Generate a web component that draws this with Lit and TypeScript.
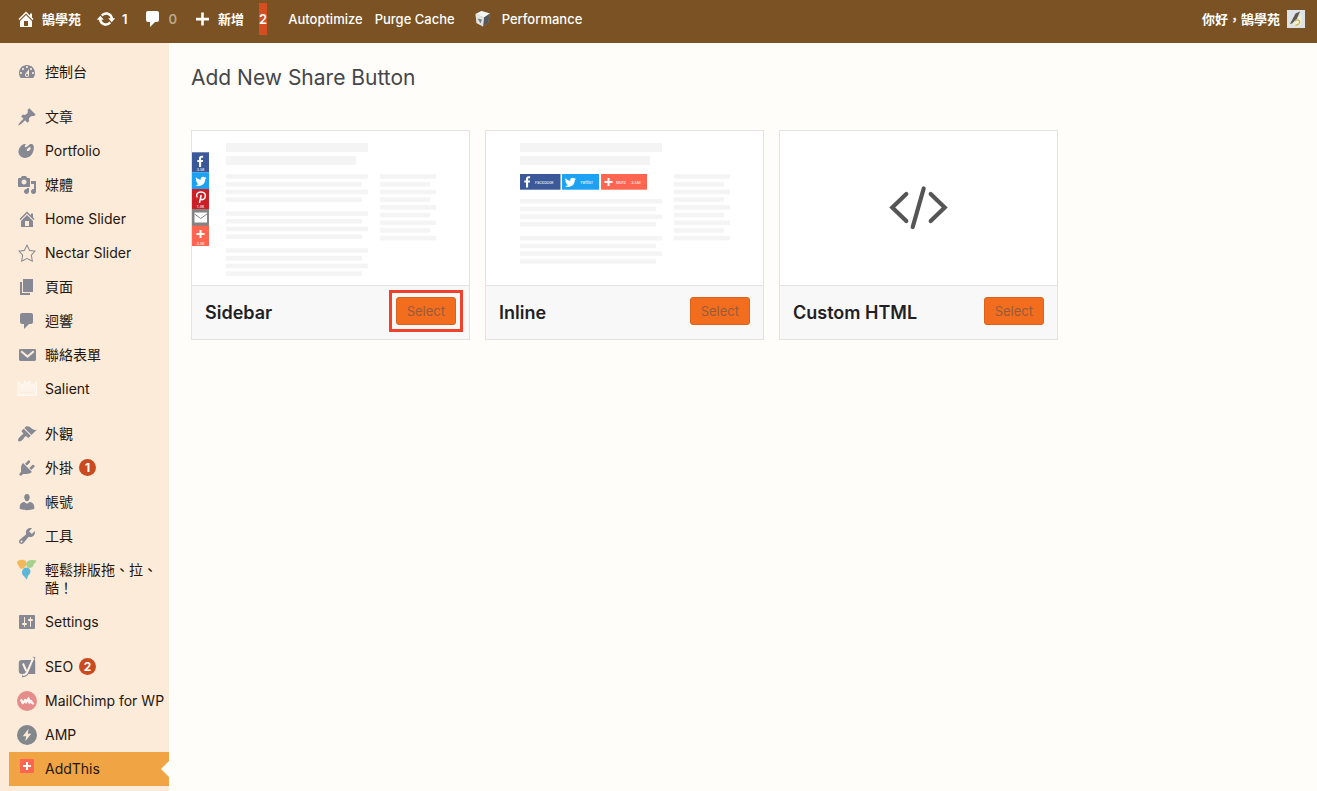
import { LitElement, html, svg, css, nothing, type SVGTemplateResult } from "lit";
import { customElement } from "lit/decorators.js";
import { classMap } from "lit/directives/class-map.js";

const glyph = (d: string) => svg`<path d=${d} fill="currentColor" fill-rule="evenodd"></path>`;

const icons: Record<string, SVGTemplateResult> = {
  home: glyph("M16 8.5l1.53 1.53-1.06 1.06L10 4.6l-6.47 6.49-1.06-1.06L10 2.5l4 4v-2h2v4zm-6-2.46l6 5.99V18H4v-5.97zM12 17v-5H8v5h4z"),
  update: glyph("M10.2 3.28c3.53 0 6.43 2.61 6.92 6h2.08l-3.5 4-3.5-4h2.32c-.45-1.97-2.21-3.45-4.32-3.45-1.45 0-2.73.71-3.54 1.78L4.95 5.66C6.23 4.2 8.11 3.28 10.2 3.28zm-.4 13.44c-3.52 0-6.43-2.61-6.92-6H.8l3.5-4c1.17 1.33 2.33 2.67 3.5 4H5.48c.45 1.97 2.21 3.45 4.32 3.45 1.45 0 2.73-.71 3.54-1.78l1.71 1.95c-1.28 1.46-3.15 2.38-5.25 2.38z"),
  comment: glyph("M5 2h9c1.1 0 2 .9 2 2v7c0 1.1-.9 2-2 2h-2l-5 5v-5H5c-1.1 0-2-.9-2-2V4c0-1.1.9-2 2-2z"),
  plus: glyph("M17 8.8v2.6h-5.2v5.2H9.2v-5.2H4V8.8h5.2V3.6h2.6v5.2z"),
  dashboard: glyph("M3.76 16h12.48c1.1-1.37 1.76-3.11 1.76-5 0-4.42-3.58-8-8-8s-8 3.58-8 8c0 1.89.66 3.63 1.76 5zM10 4c.55 0 1 .45 1 1s-.45 1-1 1-1-.45-1-1 .45-1 1-1zM6 6c.55 0 1 .45 1 1s-.45 1-1 1-1-.45-1-1 .45-1 1-1zm8 0c.55 0 1 .45 1 1s-.45 1-1 1-1-.45-1-1 .45-1 1-1zm-5.37 5.55L12 7v6c0 1.1-.9 2-2 2s-2-.9-2-2c0-.57.24-1.08.63-1.45zM4 10c.55 0 1 .45 1 1s-.45 1-1 1-1-.45-1-1 .45-1 1-1zm12 0c.55 0 1 .45 1 1s-.45 1-1 1-1-.45-1-1 .45-1 1-1zm-5 3c0-.55-.45-1-1-1s-1 .45-1 1 .45 1 1 1 1-.45 1-1z"),
  pin: glyph("M10.44 3.02l1.82-1.82 6.36 6.35-1.83 1.82c-1.05-.68-2.48-.57-3.41.36l-.75.75c-.92.93-1.04 2.35-.35 3.41l-1.83 1.82-2.41-2.41-2.8 2.79c-.42.42-3.38 2.71-3.8 2.29s1.86-3.39 2.28-3.81l2.79-2.79L4.1 9.36l1.83-1.82c1.05.69 2.48.57 3.4-.36l.75-.75c.93-.92 1.05-2.35.36-3.41z"),
  art: glyph("M8.55 3.06c1.01.34-1.95 2.01-.1 3.13 1.04.63 3.31-2.22 4.45-2.86.97-.54 2.67-.65 3.53 1.23 1.09 2.38.14 8.57-3.79 11.06-3.97 2.5-8.97 1.23-10.7-2.66-2.01-4.53 3.12-11.09 6.61-9.9zm1.21 6.45c.73 1.64 4.7-.5 3.79-2.8-.59-1.49-4.48 1.25-3.79 2.8z"),
  media: glyph("M13 11V4c0-.55-.45-1-1-1h-1.67L9 1H5L3.67 3H2c-.55 0-1 .45-1 1v7c0 .55.45 1 1 1h10c.55 0 1-.45 1-1zM7 4.5c1.38 0 2.5 1.12 2.5 2.5S8.38 9.5 7 9.5 4.5 8.38 4.5 7 5.62 4.5 7 4.5zM14 6h5v10.5c0 1.38-1.12 2.5-2.5 2.5S14 17.88 14 16.5s1.12-2.5 2.5-2.5c.17 0 .34.02.5.05V9h-3V6zm-4 8.05V13h2v3.5c0 1.38-1.12 2.5-2.5 2.5S7 17.88 7 16.5 8.12 14 9.5 14c.17 0 .34.02.5.05z"),
  star: glyph("M10 1L7 7l-6 .75 4.13 4.62L4 19l6-3 6 3-1.12-6.63L19 7.75 13 7zm0 2.24l2.34 4.69 4.65.58-3.18 3.56.87 5.15L10 14.88l-4.68 2.34.87-5.15-3.18-3.56 4.65-.58z"),
  page: glyph("M6 15V2h10v13H6zm-1 1h8v2H3V5h2v11z"),
  mail: svg`<rect x="2" y="4" width="17" height="12" rx="1.4" fill="currentColor"></rect>
    <path d="M4.2 6.2l6.3 5.4 6.3-5.4" fill="none" stroke="#fcebd9" stroke-width="2"></path>`,
  crown: svg`<path d="M1 3l4.6 4L7.6 2.5 10 5l2.6-2.5L14.8 7l4.7-4v13.500H1z" fill="#fdf3e8" stroke="#fff9f0" stroke-width="1.200"></path>
    <path d="M3.500 13.500h13.500" stroke="#fcebd9" stroke-width="1.200"></path>`,
  brush: glyph("M14.48 11.06L7.41 3.99l1.5-1.5c.5-.56 2.3-.47 3.51.32 1.21.8 1.43 1.28 2.91 2.1 1.18.64 2.45 1.26 4.45.85zm-.71.71L6.7 4.7 4.93 6.47c-.39.39-.39 1.02 0 1.41l1.06 1.06c.39.39.39 1.03 0 1.42-.6.6-1.43 1.11-2.21 1.69-.35.26-.7.53-1.01.84C1.43 14.23.4 16.08 1.4 17.07c.99 1 2.84-.03 4.18-1.36.31-.31.58-.66.85-1.02.57-.78 1.08-1.61 1.69-2.21.39-.39 1.02-.39 1.41 0l1.06 1.06c.39.39 1.02.39 1.41 0z"),
  plug: glyph("M13.11 4.36L9.87 7.6 8 5.73l3.24-3.24c.35-.34 1.05-.2 1.56.32.52.51.66 1.21.31 1.55zm-8 1.77l.91-1.12 9.01 9.01-1.19.84c-.71.71-2.63 1.16-3.82 1.16H6.14L4.9 17.26c-.59.59-1.54.59-2.12 0-.59-.58-.59-1.53 0-2.12l1.24-1.24v-3.88c0-1.13.4-3.19 1.09-3.89zm7.26 3.97l3.24-3.24c.34-.35 1.04-.21 1.55.31.52.51.66 1.21.31 1.55l-3.24 3.25z"),
  user: glyph("M10 9.25c-2.27 0-2.73-3.44-2.73-3.44C7 4.02 7.82 2 9.97 2c2.16 0 2.98 2.02 2.71 3.81 0 0-.41 3.44-2.68 3.44zm0 2.57L12.72 10c2.39 0 4.52 2.33 4.52 4.53v2.49s-3.65 1.13-7.24 1.13c-3.65 0-7.24-1.13-7.24-1.13v-2.49c0-2.25 1.94-4.48 4.47-4.48z"),
  wrench: glyph("M16.68 9.77c-1.34 1.34-3.3 1.67-4.95.99l-5.41 6.52c-.99.99-2.59.99-3.58 0s-.99-2.59 0-3.57l6.52-5.42c-.68-1.65-.35-3.61.99-4.95 1.28-1.28 3.12-1.62 4.72-1.06l-2.89 2.89 2.82 2.82 2.86-2.87c.53 1.58.18 3.39-1.08 4.65zM3.81 16.21c.4.39 1.04.39 1.43 0 .4-.4.4-1.04 0-1.43-.39-.4-1.03-.4-1.43 0-.39.39-.39 1.03 0 1.43z"),
  composer: svg`<path d="M0 2.500C.5 0 4-.8 7 0c3 1 3.500 4.500 1.300 6.500C7 8.800 3.800 9.600 2.300 7.800 2.800 5.500.2 5 0 2.500z" fill="#f3b75c"></path>
    <path d="M19.500.6c-3-.9-7-.9-9 1-1.900 1.900-1.300 5 .4 6 2.200 1.100 4.900.2 5.400-2 .2-2 2.700-2.500 3.200-5z" fill="#a9d18e"></path>
    <path d="M9.800 7.600c3 .5 4.200 3 3.400 5.400-.6 1.700-2.500 2.300-2.500 3.900 0 1-.6 2.100-1.700 2.500.2-1.900-2.900-3.200-3.800-5.400C4.200 10.800 6.800 7.300 9.800 7.600z" fill="#5cb8d8"></path>`,
  sliders: glyph("M18 16V4c0-.55-.45-1-1-1H3c-.55 0-1 .45-1 1v12c0 .55.45 1 1 1h14c.55 0 1-.45 1-1zM8 11h1c.55 0 1 .45 1 1s-.45 1-1 1H8v1.500c0 .28-.22.5-.5.5s-.5-.22-.5-.5V13H6c-.55 0-1-.45-1-1s.45-1 1-1h1V5.500c0-.28.22-.5.5-.5s.5.22.5.5V11zm5-2h-1c-.55 0-1-.45-1-1s.45-1 1-1h1V5.500c0-.28.22-.5.5-.5s.5.22.5.5V7h1c.55 0 1 .45 1 1s-.45 1-1 1h-1v5.500c0 .28-.22.5-.5.5s-.5-.22-.5-.5V9z"),
  yoast: svg`<path d="M4.800 3h12.400q1 0 1 1v13H4.800a3 3 0 0 1-3-3V6a3 3 0 0 1 3-3z" fill="currentColor"></path>
    <path d="M17.300 0L11 15c-1.200 3-2.700 4-6 4" fill="none" stroke="currentColor" stroke-width="2.600"></path>
    <path d="M6 6.500l3.300 7.600M16.500.5L10.300 14.800c-1 2.400-2.200 3.200-4.700 3.300" fill="none" stroke="#fff3e6" stroke-width="2"></path>`,
  chimp: svg`<circle cx="10" cy="10" r="10" fill="#e58d8b"></circle>
    <path d="M2.800 9l2-1.300 1.400 2.300L8 7.500l1.500 1 2.300-3 1.200 3 1.700.4 2.600 4-1.500.8-2.400-1.800-1.200 1.300-1.700-2.400-1.200 2.300-1.600-1.300-1.800 1.600-1.700-1.300z" fill="#fff4ef"></path>`,
  bolt: svg`<circle cx="10" cy="10" r="10" fill="#82878c"></circle><path d="M11.600 3.800L5.800 11.300h3.400l-.9 5 5.900-7.600h-3.500z" fill="#fcebd9"></path>`,
  addthis: svg`<rect x="3" width="14" height="14" fill="#ff6550"></rect><path d="M10 3v8M6 7h8" stroke="#fff" stroke-width="2"></path>`,
  cube: svg`<path d="M2.500 5l6-3L17 4.500l-1.700 9L10 17.500 3.500 14z" fill="#9b9b96"></path>
    <path d="M2.500 5l6-3L17 4.500l-6 4z" fill="#f4f4f0"></path><path d="M11 8.500l6-4-1.700 9L10 17.500z" fill="#55585a"></path>
    <path d="M2.500 5L11 8.500l-1 9L3.500 14z" fill="#e4e4e0"></path><path d="M4.500 9.500l4.500 1-1.500 4z" fill="#7d8082"></path>`,
  avatar: svg`<rect x="1" y="1" width="18" height="18" fill="#dde3e6"></rect><path d="M4 15L9.500 4.500 14 2.500l-3 7-5 5z" fill="#5d5a4c"></path>
    <path d="M8 16.500c-1-3 4-6 6.500-11 1.500 4 1 10-1.500 11.500z" fill="#f5f1d2"></path><path d="M9 12c2-2 5-1.500 4.500 1.500-.3 2-2.700 3-4.200 2.500" fill="none" stroke="#c9b45d" stroke-width="1.300"></path>`,
};

const icon = (name: string) =>
  html`<svg class="icon" viewBox="0 0 20 20" aria-hidden="true">${icons[name]}</svg>`;

interface Entry {
  label: string;
  icon: string;
  badge?: number;
  active?: boolean;
}

const menu: Entry[][] = [
  [{ label: "控制台", icon: "dashboard" }],
  [
    { label: "文章", icon: "pin" },
    { label: "Portfolio", icon: "art" },
    { label: "媒體", icon: "media" },
    { label: "Home Slider", icon: "home" },
    { label: "Nectar Slider", icon: "star" },
    { label: "頁面", icon: "page" },
    { label: "迴響", icon: "comment" },
    { label: "聯絡表單", icon: "mail" },
    { label: "Salient", icon: "crown" },
  ],
  [
    { label: "外觀", icon: "brush" },
    { label: "外掛", icon: "plug", badge: 1 },
    { label: "帳號", icon: "user" },
    { label: "工具", icon: "wrench" },
    { label: "輕鬆排版拖、拉、酷！", icon: "composer" },
    { label: "Settings", icon: "sliders" },
  ],
  [
    { label: "SEO", icon: "yoast", badge: 2 },
    { label: "MailChimp for WP", icon: "chimp" },
    { label: "AMP", icon: "bolt" },
    { label: "AddThis", icon: "addthis", active: true },
  ],
];

const PITCH = 7.7;

/** Alternating long and short placeholder lines. */
const lines = (x: number, y: number, count: number, long: number, short: number) =>
  Array.from({ length: count }, (_, i) =>
    svg`<rect x=${x} y=${y + i * PITCH} width=${i % 2 ? short : long} height="4.500" fill="#f4f4f4"></rect>`);

const pageSkeleton = (groups: number[]) => svg`
  <rect x="34" y="12" width="142" height="9" fill="#f4f4f4"></rect>
  <rect x="34" y="25" width="130" height="9" fill="#f4f4f4"></rect>
  ${groups.map((y) => lines(34, y, 4, 142, 136))}
  ${lines(188, 43.3, 9, 56, 50)}`;

const facebookMark = svg`<path d="M5 12V7H3.300V4.900H5V3.400C5 1.600 6 .7 7.600.7h1.500v2H8c-.7 0-.9.300-.9.900v1.300h2L8.800 7H7.100v5z" fill="#fff"></path>`;
const twitterMark = svg`<path d="M12 2.900c-.4.200-.8.300-1.300.4.500-.3.800-.7 1-1.300-.4.300-.9.500-1.400.6A2.300 2.300 0 0 0 6.300 4.700C4.400 4.600 2.700 3.700 1.600 2.300c-.6 1-.3 2.300.7 3-.4 0-.7-.1-1-.3 0 1.100.8 2 1.800 2.300-.3.100-.7.100-1 0 .3.900 1.100 1.600 2.100 1.600A4.600 4.600 0 0 1 .8 9.900c4.800 2.700 10.100-.5 10-5.800.5-.3.900-.7 1.200-1.200z" fill="#fff"></path>`;
const plusMark = svg`<path d="M6 2v8M2 6h8" stroke="#fff" stroke-width="2"></path>`;

const sidebarPreview = svg`
  ${pageSkeleton([43.3, 80.3, 117.3])}
  <rect y="21.300" width="17" height="20" fill="#3b5998"></rect>
  <rect y="41.300" width="17" height="17" fill="#1da1f2"></rect>
  <rect y="58" width="17" height="20" fill="#cb2027"></rect>
  <rect y="78" width="17" height="17" fill="#848484"></rect>
  <rect y="94.700" width="17" height="20.300" fill="#ff6550"></rect>
  <g transform="translate(2 24)">${facebookMark}</g>
  <g transform="translate(2.500 44)">${twitterMark}</g>
  <path d="M5.200 66.500C3.500 63.500 5.500 61 9 61c3 0 4.800 2 4.300 4.600-.5 2.900-3.300 3.900-4.700 2.100M9.200 64l-1.800 8" fill="none" stroke="#fff" stroke-width="1.500"></path>
  <rect x="2.500" y="81.500" width="12.500" height="10" fill="#fff"></rect>
  <path d="M2.500 83l6.200 4.500L15 83" fill="none" stroke="#848484" stroke-width="1"></path>
  <g transform="translate(2.500 97)">${plusMark}</g>
  <text class="micro" x="8.500" y="40" text-anchor="middle">3.5k</text>
  <text class="micro" x="8.500" y="77" text-anchor="middle">1.4k</text>
  <text class="micro" x="8.500" y="113.500" text-anchor="middle">3.5k</text>`;

const inlinePreview = svg`
  ${pageSkeleton([68, 105])}
  <rect x="34" y="43" width="40.500" height="15.700" fill="#3b5998"></rect>
  <rect x="76" y="43" width="37" height="15.700" fill="#1da1f2"></rect>
  <rect x="115" y="43" width="46" height="15.700" fill="#ff6550"></rect>
  <g transform="translate(35 44.500)">${facebookMark}</g>
  <g transform="translate(78 45)">${twitterMark}</g>
  <g transform="translate(116.500 45)">${plusMark}</g>
  <text class="micro" x="49" y="52.800">Facebook</text>
  <text class="micro" x="94" y="52.800">Twitter</text>
  <text class="micro" x="130" y="52.800">More</text>
  <text class="micro" x="145" y="52.800">3.5M</text>`;

const codePreview = svg`
  <path d="M126.300 63l-14 13.500 14 13.500M143.700 57.500l-11 38.500M150.700 63l14 13.500-14 13.500" fill="none" stroke="#555" stroke-width="4.200" stroke-linecap="round"></path>`;

const tools = [
  { name: "Sidebar", art: sidebarPreview, marked: true },
  { name: "Inline", art: inlinePreview, marked: false },
  { name: "Custom HTML", art: codePreview, marked: false },
];

@customElement("app-root")
export class AppRoot extends LitElement {
  static styles = css`
    :host {
      display: flex;
      flex-direction: column;
      min-height: 100vh;
      background: #fffdfa;
      color: #24160e;
      font-family: Inter, "Noto Sans CJK TC", sans-serif;
      font-size: 14px;
      line-height: 18px;
    }
    * { box-sizing: border-box; }
    a { color: inherit; text-decoration: none; }
    ul { list-style: none; margin: 0; padding: 0; }
    .icon { width: 20px; height: 20px; flex: none; display: block; overflow: visible; }

    .bar {
      display: flex;
      justify-content: space-between;
      padding: 3px 11px 8px 16px;
      background: #7a5223;
      color: #fff;
      font-size: 13px;
      font-weight: 600;
      line-height: 32px;
    }
    .bar-group { display: flex; flex-wrap: wrap; gap: 0 15px; }
    .bar-group.plugins { gap: 0 12px; margin-left: 6px; font-weight: 500; }
    .bar-link { display: flex; align-items: center; gap: 6px; }
    .bar-link.dim span { color: #bfa78a; }
    .bar-link.alert { background: #d54e21; }
    .bar-link.wide { gap: 9px; margin-left: 6px; }

    .body { display: flex; flex: 1; }
    .menu {
      flex: none;
      width: 169px;
      padding: 12px 0 5px 9px;
      background: #fcebd9;
      display: flex;
      flex-direction: column;
      gap: 11px;
    }
    .menu-link { position: relative; display: flex; gap: 8px; padding: 8px 0 8px 8px; }
    .menu-link .icon { color: #868893; margin: -1px 0; }
    .menu-text { white-space: nowrap; }
    .menu-link.wrap .menu-text { white-space: normal; }
    .menu-link.active { background: #f0a444; }
    .menu-link.active::after {
      content: "";
      position: absolute;
      right: 0;
      top: 9px;
      width: 8px;
      height: 16px;
      background: #fffdfa;
      clip-path: polygon(100% 0, 0 50%, 100% 100%);
    }
    .badge {
      display: inline-block;
      vertical-align: top;
      min-width: 17px;
      margin-left: 6px;
      border-radius: 9px;
      background: #ca4a1f;
      color: #fff;
      font-size: 12px;
      font-weight: 700;
      line-height: 17px;
      text-align: center;
    }

    .main { flex: 1; padding: 20px 20px 20px 22px; }
    .title {
      margin: 0 0 37px;
      color: #44464a;
      font-size: 21px;
      font-weight: 400;
      line-height: 30px;
    }
    .cards { display: grid; grid-template-columns: repeat(auto-fill, 279px); gap: 15px; }
    .card { border: 1px solid #e3e3e3; background: #fff; }
    .art { display: block; width: 100%; }
    .micro { fill: #fff; font-size: 4px; }
    .foot {
      display: flex;
      align-items: flex-start;
      justify-content: space-between;
      padding: 11px 13px 10px;
      border-top: 1px solid #e3e3e3;
      background: #f8f8f9;
    }
    .name { margin: 0; color: #1f1f24; font-size: 18px; font-weight: 600; line-height: 32px; }
    .select {
      position: relative;
      min-width: 60px;
      height: 28px;
      padding: 0 10px;
      border: 1px solid #d9621d;
      border-radius: 3px;
      background: #f36d1f;
      color: #985c3c;
      font: 400 13px/26px Inter, sans-serif;
    }
    .select.marked::after {
      content: "";
      position: absolute;
      inset: -8px;
      border: 3px solid #f0412a;
    }
  `;

  private barLink(label: string, name?: string, extra = "") {
    return html`<a class="bar-link ${extra}" href="#">${name ? icon(name) : nothing}<span>${label}</span></a>`;
  }

  private menuLink(entry: Entry) {
    const classes = { "menu-link": true, active: !!entry.active, wrap: entry.icon === "composer" };
    return html`<li>
      <a class=${classMap(classes)} href="#">
        ${icon(entry.icon)}
        <span class="menu-text">${entry.label}${entry.badge ? html`<span class="badge">${entry.badge}</span>` : nothing}</span>
      </a>
    </li>`;
  }

  render() {
    return html`
      <header class="bar">
        <div class="bar-group">
          ${this.barLink("鵠學苑", "home")}
          ${this.barLink("1", "update")}
          ${this.barLink("0", "comment", "dim")}
          ${this.barLink("新增", "plus")}
          ${this.barLink("2", undefined, "alert")}
          <div class="bar-group plugins">
            ${this.barLink("Autoptimize")}
            ${this.barLink("Purge Cache")}
            ${this.barLink("Performance", "cube", "wide")}
          </div>
        </div>
        <a class="bar-link" href="#"><span>你好，鵠學苑</span>${icon("avatar")}</a>
      </header>
      <div class="body">
        <nav class="menu">
          ${menu.map((group) => html`<ul>${group.map((entry) => this.menuLink(entry))}</ul>`)}
        </nav>
        <main class="main">
          <h1 class="title">Add New Share Button</h1>
          <div class="cards">
            ${tools.map((tool) => html`
              <section class="card">
                <svg class="art" viewBox="0 0 277 154" aria-hidden="true">${tool.art}</svg>
                <div class="foot">
                  <h2 class="name">${tool.name}</h2>
                  <button class=${classMap({ select: true, marked: tool.marked })} type="button">Select</button>
                </div>
              </section>`)}
          </div>
        </main>
      </div>`;
  }
}
